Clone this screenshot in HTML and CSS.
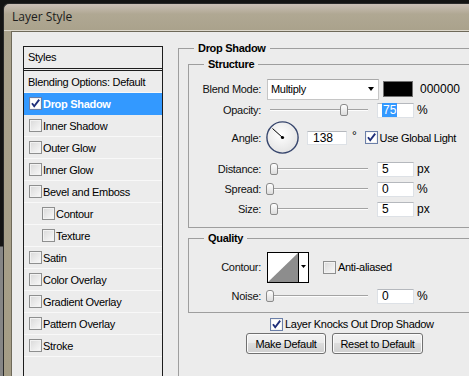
FILE: index.html
```html
<!DOCTYPE html>
<html lang="en">
<head>
  <meta charset="UTF-8">
  <meta name="viewport" content="width=device-width, initial-scale=1.0">
  <title>Layer Style</title>
  <link rel="stylesheet" href="styles.css">
</head>
<body>
  <div class="window">
    <div class="titlebar">Layer Style</div>

    <div class="dialog">
      <!-- left: list of effects -->
      <div class="styles-panel">
        <div class="styles-head">Styles</div>
        <ul class="styles-list">
          <li class="plain">Blending Options: Default</li>
          <li class="selected"><span class="check on"><svg viewBox="0 0 11 11"><path d="M2 5.2l2.2 3L9.2 1.6"/></svg></span>Drop Shadow</li>
          <li><span class="check"></span>Inner Shadow</li>
          <li><span class="check"></span>Outer Glow</li>
          <li><span class="check"></span>Inner Glow</li>
          <li><span class="check"></span>Bevel and Emboss</li>
          <li class="sub"><span class="check"></span>Contour</li>
          <li class="sub"><span class="check"></span>Texture</li>
          <li><span class="check"></span>Satin</li>
          <li><span class="check"></span>Color Overlay</li>
          <li><span class="check"></span>Gradient Overlay</li>
          <li><span class="check"></span>Pattern Overlay</li>
          <li><span class="check"></span>Stroke</li>
        </ul>
      </div>

      <!-- right: drop shadow settings -->
      <fieldset class="group outer">
        <legend>Drop Shadow</legend>

        <fieldset class="group structure">
          <legend>Structure</legend>

          <div class="row row-blend">
            <span class="label">Blend Mode:</span>
            <div class="select">Multiply<span class="arrow"></span></div>
            <span class="swatch"></span>
            <span class="hex">000000</span>
          </div>

          <div class="row">
            <span class="label">Opacity:</span>
            <div class="slider"><span class="thumb" style="left: 74px"></span></div>
            <div class="field"><span class="sel">75</span></div>
            <span class="unit">%</span>
          </div>

          <div class="row row-angle">
            <span class="label">Angle:</span>
            <svg class="dial" width="33" height="33" viewBox="0 0 33 33">
              <defs>
                <radialGradient id="dialFill" cx="45%" cy="40%" r="65%">
                  <stop offset="0" stop-color="#ffffff"/>
                  <stop offset="1" stop-color="#e2e2e2"/>
                </radialGradient>
              </defs>
              <circle cx="16.5" cy="16.5" r="15.6" fill="url(#dialFill)" stroke="#37466d" stroke-width="1.4"/>
              <line x1="16.5" y1="16.5" x2="6.5" y2="7.5" stroke="#000" stroke-width="1"/>
              <circle cx="16.5" cy="16.5" r="1.6" fill="#000"/>
            </svg>
            <div class="field wide">138</div>
            <span class="deg">°</span>
            <span class="check on"><svg viewBox="0 0 11 11"><path d="M2 5.2l2.2 3L9.2 1.6"/></svg></span>
            <span class="check-text">Use Global Light</span>
          </div>

          <div class="row">
            <span class="label">Distance:</span>
            <div class="slider"><span class="thumb" style="left: 4px"></span></div>
            <div class="field">5</div>
            <span class="unit">px</span>
          </div>

          <div class="row">
            <span class="label">Spread:</span>
            <div class="slider"><span class="thumb" style="left: 0px"></span></div>
            <div class="field">0</div>
            <span class="unit">%</span>
          </div>

          <div class="row">
            <span class="label">Size:</span>
            <div class="slider"><span class="thumb" style="left: 4px"></span></div>
            <div class="field">5</div>
            <span class="unit">px</span>
          </div>
        </fieldset>

        <fieldset class="group quality">
          <legend>Quality</legend>

          <div class="row row-contour">
            <span class="label">Contour:</span>
            <svg class="contour" width="42" height="31" viewBox="0 0 42 31">
              <rect x="0.5" y="0.5" width="41" height="30" fill="#fff" stroke="#000"/>
              <polygon points="1,30 31,1 31,30" fill="#8d8d8d"/>
              <line x1="31.5" y1="0" x2="31.5" y2="31" stroke="#000"/>
              <polygon points="34,13 39,13 36.5,16" fill="#000"/>
            </svg>
            <span class="check gap"></span>
            <span class="check-text">Anti-aliased</span>
          </div>

          <div class="row">
            <span class="label">Noise:</span>
            <div class="slider"><span class="thumb" style="left: 0px"></span></div>
            <div class="field">0</div>
            <span class="unit">%</span>
          </div>
        </fieldset>

        <div class="knocks">
          <span class="check on"><svg viewBox="0 0 11 11"><path d="M2 5.2l2.2 3L9.2 1.6"/></svg></span>
          <span class="check-text">Layer Knocks Out Drop Shadow</span>
        </div>

        <div class="buttons">
          <button class="btn">Make Default</button>
          <button class="btn btn-reset">Reset to Default</button>
        </div>
      </fieldset>
    </div>
  </div>
</body>
</html>
```

FILE: styles.css
```css
body {
  margin: 0;
  height: 376px;
  overflow: hidden;
  background: linear-gradient(#141414 0, #141414 246px, #858585 247px);
  font-family: "Liberation Sans", Arial, sans-serif;
  font-size: 11px;
  letter-spacing: -0.3px;
  color: #000;
}

.window {
  margin: 3px 0 0 3px;
  height: 373px;
  box-sizing: border-box;
  padding-left: 7px;
  border-top: 1px solid #2a2a2a;
  border-left: 1px solid #2a2a2a;
  border-radius: 6px 0 0 0;
  background: linear-gradient(#cbc0b6, #b0a893 10px, #aaa28c 26px, #a49c85);
  display: flex;
  flex-direction: column;
  overflow: hidden;
}

.titlebar {
  flex: none;
  height: 26px;
  line-height: 26px;
  margin-left: -7px;
  padding-left: 8px;
  font-family: "Open Sans", "Liberation Sans", sans-serif;
  font-size: 12px;
  letter-spacing: 0;
  color: #1c1c1c;
  border-bottom: 1px solid #ddd8cc;
}

.dialog {
  flex: 1;
  min-height: 0;
  display: flex;
  padding: 10px 0 0 11px;
  background: #ececec;
  border-top: 1px solid #6e6959;
  border-left: 1px solid #6e6959;
  overflow: hidden;
}

/* styles list */

.styles-panel {
  flex: none;
  width: 140px;
  margin-top: 4px;
  box-sizing: border-box;
  border: 1px solid #1d1d1d;
  border-bottom: none;
}

.styles-head {
  height: 21px;
  line-height: 21px;
  padding-left: 4px;
  border-bottom: 3px double #1d1d1d;
}

.styles-list {
  list-style: none;
  margin: 0;
  padding: 0;
}

.styles-list li {
  height: 21px;
  padding-left: 5px;
  display: flex;
  align-items: center;
  border-bottom: 1px solid #f8f8f8;
}

.styles-list li.plain {
  padding-left: 4px;
}

.styles-list li.sub {
  padding-left: 18px;
}

.styles-list li.selected {
  background: #3399ff;
  color: #fff;
  font-weight: bold;
  border-bottom-color: #3399ff;
}

.styles-list .check {
  margin-right: 1px;
}

.check {
  flex: none;
  width: 13px;
  height: 13px;
  box-sizing: border-box;
  border: 1px solid #8e8f8f;
  background: linear-gradient(135deg, #d9d9d9, #f9f9f9);
  box-shadow: inset 0 0 0 1px #f2f2f2;
  display: inline-block;
}

.check.on {
  background: #fff;
  border-color: #6b7fa8;
}

.check svg {
  display: block;
  width: 11px;
  height: 11px;
}

.check path {
  fill: none;
  stroke: #1f2f7a;
  stroke-width: 1.9;
}

.check-text {
  margin-left: 2px;
}

/* group boxes */

.group {
  margin: 0;
  min-width: 0;
  border: 1px solid #9e9e9e;
  border-right: none;
}

.group legend {
  padding: 0 4px;
  font-weight: bold;
  line-height: 13px;
}

.outer {
  flex: 1;
  margin-left: 15px;
  padding: 3px 0 0 9px;
  border-bottom: none;
}

.outer > legend {
  margin-left: 6px;
}

.structure {
  padding: 7px 0 8px 0;
}

.structure > legend,
.quality > legend {
  margin-left: 15px;
}

.quality {
  margin-top: 4px;
  padding: 6px 0 6px 0;
}

.row {
  height: 20px;
  display: flex;
  align-items: center;
}

.label {
  flex: none;
  width: 72px;
  text-align: right;
  color: #111;
}

.row-blend {
  height: 22px;
}

.row-angle {
  height: 35px;
  margin-bottom: 4px;
}

.row-contour {
  height: 32px;
  margin-bottom: 3px;
}

.select {
  width: 112px;
  height: 21px;
  margin-left: 6px;
  box-sizing: border-box;
  padding-left: 3px;
  border: 1px solid #c6c6c6;
  border-top-color: #a9a9a9;
  background: #fff;
  display: flex;
  align-items: center;
}

.arrow {
  margin-left: auto;
  margin-right: 4px;
  border-left: 3.5px solid transparent;
  border-right: 3.5px solid transparent;
  border-top: 4px solid #000;
}

.swatch {
  width: 30px;
  height: 16px;
  margin-left: 4px;
  box-sizing: border-box;
  border: 1px solid #707070;
  background: #000;
}

.hex {
  margin-left: 7px;
  font-size: 12px;
  letter-spacing: 0;
}

.slider {
  position: relative;
  flex: none;
  width: 106px;
  height: 14px;
  margin-left: 5px;
}

.slider::before {
  content: "";
  position: absolute;
  left: 4px;
  right: 4px;
  top: 6px;
  height: 1px;
  background: #a3a3a3;
  border-bottom: 1px solid #fdfdfd;
}

.thumb {
  position: absolute;
  top: 1px;
  width: 8px;
  height: 12px;
  box-sizing: border-box;
  border: 1px solid #8a8a8a;
  border-radius: 3px 3px 2px 2px;
  background: linear-gradient(#ffffff, #dcdcdc);
}

.field {
  flex: none;
  width: 37px;
  height: 15px;
  margin-left: 5px;
  box-sizing: border-box;
  padding-left: 4px;
  line-height: 13px;
  background: #fff;
  border: 1px solid #dde1e6;
  border-top-color: #b5b8bd;
  font-size: 12px;
  letter-spacing: 0;
}

.field.wide {
  width: 40px;
  height: 14px;
  line-height: 12px;
  margin-left: 8px;
  padding-left: 5px;
}

.sel {
  background: #3399ff;
  color: #fff;
  padding: 0 1px;
}

.unit {
  margin-left: 3px;
  font-size: 12px;
  letter-spacing: 0;
}

.dial {
  flex: none;
  margin-left: 5px;
}

.deg {
  margin-left: 5px;
  align-self: flex-start;
  margin-top: 9px;
  font-size: 12px;
}

.deg + .check {
  margin-left: 8px;
}

.contour {
  flex: none;
  margin-left: 6px;
}

.check.gap {
  margin-left: 14px;
}

.knocks {
  height: 16px;
  margin-top: 3px;
  padding-left: 82px;
  display: flex;
  align-items: center;
}

.buttons {
  margin-top: 1px;
  padding-left: 58px;
  display: flex;
}

.btn {
  width: 80px;
  height: 21px;
  padding: 0;
  font-family: inherit;
  font-size: 11px;
  letter-spacing: -0.3px;
  color: #000;
  border: 1px solid #707070;
  border-radius: 3px;
  background: linear-gradient(#f2f2f2 0%, #ebebeb 45%, #dddddd 50%, #cfcfcf 100%);
  box-shadow: inset 0 0 0 1px #fbfbfb;
}

.btn-reset {
  width: 91px;
  margin-left: 6px;
}
```
